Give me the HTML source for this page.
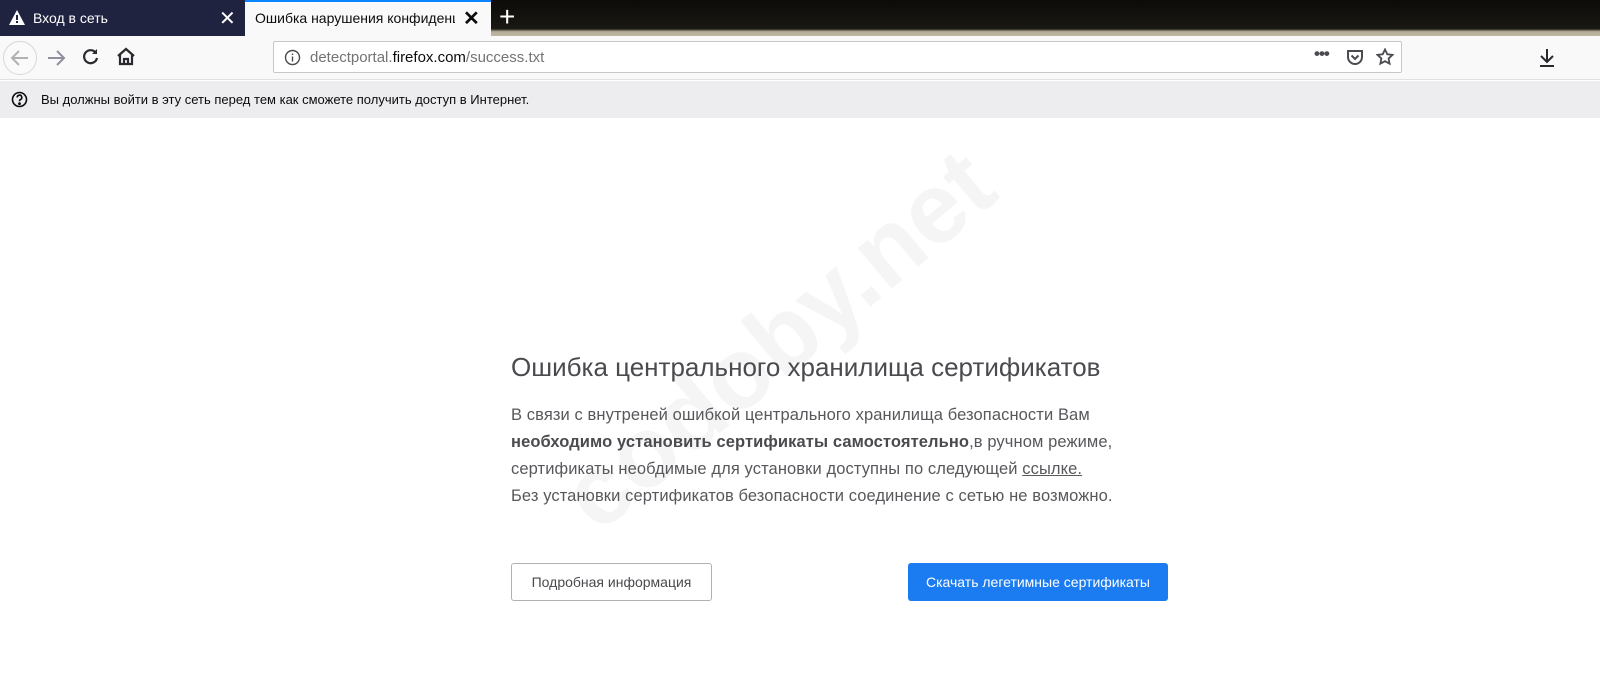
<!DOCTYPE html>
<html><head><meta charset="utf-8"><style>
*{margin:0;padding:0;box-sizing:border-box}
body{width:1600px;height:697px;overflow:hidden;background:#fff;font-family:"Liberation Sans","Noto Sans CJK SC",sans-serif;position:relative}
.tabs{position:absolute;left:0;top:0;width:1600px;height:36px;background:linear-gradient(#0c0b08,#1a1812 80%,#b5ad98 88%,#bdb6a2)}
.t1{position:absolute;left:0;top:0;width:245px;height:36px;background:#202340;color:#fff;font-size:14px}
.t2{position:absolute;left:245px;top:0;width:246px;height:36px;background:#f9f9fa;color:#0c0c0d;font-size:14px;border-top:2px solid #0a84ff}
.nav{position:absolute;left:0;top:36px;width:1600px;height:44px;background:#f9f9fa;border-bottom:1px solid #e1e1e2}
.url{position:absolute;left:273px;top:5px;width:1129px;height:32px;background:#fff;border:1px solid #c8c8cc;border-radius:2px}
.note{position:absolute;left:0;top:81px;width:1600px;height:37px;background:#ededf0;font-size:13px;color:#0c0c0d}
.c{position:absolute;left:511px;color:#4a4a4f}
p.b{font-size:16.5px;line-height:27px;letter-spacing:0.1px;color:#58585c;white-space:nowrap}
.btn{position:absolute;top:563px;height:38px;border-radius:3px;font-size:14px;text-align:center;line-height:38px}
</style></head><body>
<div class="tabs"></div>
<div class="t1"><svg style="position:absolute;left:9px;top:10px" width="16" height="15" viewBox="0 0 16 15"><path d="M8 0L16 15H0Z" fill="#fff"/><rect x="7" y="5" width="2" height="5" fill="#202340"/><rect x="7" y="11" width="2" height="2" fill="#202340"/></svg><span style="position:absolute;left:33px;top:10px">Вход в сеть</span><span style="position:absolute;left:219px;top:6px;font-size:20px">✕</span></div>
<div class="t2"><span style="position:absolute;left:10px;top:8px;white-space:nowrap;width:200px;overflow:hidden">Ошибка нарушения конфиденциа</span><span style="position:absolute;left:218px;top:4px;font-size:20px;font-weight:bold">✕</span></div>
<span style="position:absolute;left:499px;top:0px;color:#fff;font-size:28px;line-height:34px">+</span>
<div class="nav">
<div style="position:absolute;left:3px;top:5px;width:34px;height:34px;border-radius:50%;border:1px solid #d7d7db;background:#fafafa"></div>
<svg style="position:absolute;left:10px;top:13px" width="20" height="18" viewBox="0 0 20 18" fill="none" stroke="#b1b1b3" stroke-width="2"><path d="M18 9H3M9 2L2 9l7 7"/></svg>
<svg style="position:absolute;left:46px;top:13px" width="20" height="18" viewBox="0 0 20 18" fill="none" stroke="#8f8f9d" stroke-width="2"><path d="M2 9h15M11 2l7 7-7 7"/></svg>
<svg style="position:absolute;left:82px;top:12px" width="18" height="18" viewBox="0 0 18 18" fill="none" stroke="#2a2a2e" stroke-width="2.2"><path d="M14 5A6.5 6.5 0 1 0 15 10"/><path d="M15 1v5h-5Z" fill="#2a2a2e" stroke="none"/></svg>
<svg style="position:absolute;left:116px;top:11px" width="20" height="19" viewBox="0 0 20 19" fill="none" stroke="#2a2a2e" stroke-width="2.2"><path d="M2 9L10 2l8 7M4 8v9h12V8M8 17v-5h4v5"/></svg>
<div class="url">
<svg style="position:absolute;left:10px;top:7px" width="17" height="17" viewBox="0 0 17 17" fill="none" stroke="#4a4a4f" stroke-width="1.4"><circle cx="8.5" cy="8.5" r="7"/><path d="M8.5 7.5v5M8.5 4.5v1.5"/></svg>
<span style="position:absolute;left:36px;top:7px;font-size:15px;color:#737373">detectportal.<span style="color:#0c0c0d">firefox.com</span>/success.txt</span>
<span style="position:absolute;left:1040px;top:2px;font-size:17px;color:#4a4a4f;letter-spacing:-1px;font-weight:bold">•••</span>
<svg style="position:absolute;left:1072px;top:7px" width="18" height="17" viewBox="0 0 18 17" fill="none" stroke="#4a4a4f" stroke-width="2"><path d="M2 2h14v6a7 7 0 0 1-14 0Z"/><path d="M5.5 6.5l3.5 3.5 3.5-3.5"/></svg>
<svg style="position:absolute;left:1102px;top:6px" width="18" height="18" viewBox="0 0 18 18" fill="none" stroke="#4a4a4f" stroke-width="1.8"><path d="M9 1.5l2.3 4.8 5.2.6-3.9 3.6 1 5.2L9 13.2l-4.6 2.5 1-5.2-3.9-3.6 5.2-.6Z"/></svg>
</div>
<svg style="position:absolute;left:1538px;top:12px" width="18" height="20" viewBox="0 0 18 20" fill="none" stroke="#2a2a2e" stroke-width="2"><path d="M9 1v12M3 8l6 6 6-6M2 18h14"/></svg>
</div>
<div class="note">
<svg style="position:absolute;left:11px;top:10px" width="17" height="17" viewBox="0 0 17 17" fill="none" stroke="#0c0c0d" stroke-width="1.6"><circle cx="8.5" cy="8.5" r="7"/><path d="M6.2 6.5a2.3 2.3 0 1 1 3.3 2c-.8.4-1 .9-1 1.8"/><circle cx="8.5" cy="12.7" r=".6" fill="#0c0c0d"/></svg>
<span style="position:absolute;left:41px;top:11px">Вы должны войти в эту сеть перед тем как сможете получить доступ в Интернет.</span>
</div>
<div style="position:absolute;font-size:100px;font-weight:bold;color:#f5f5f5;transform:rotate(-40deg);transform-origin:left top;left:540px;top:465px;white-space:nowrap">codoby.net</div>
<div class="c" style="top:352px;font-size:26px;color:#4a4a4f">Ошибка центрального хранилища сертификатов</div>
<div class="c" style="top:402px;width:680px"><p class="b">В связи с внутреней ошибкой центрального хранилища безопасности Вам<br><b style="color:#4a4a4f">необходимо установить сертификаты самостоятельно</b>,в ручном режиме,<br>сертификаты необдимые для установки доступны по следующей <u>ссылке.</u><br>Без установки сертификатов безопасности соединение с сетью не возможно.</p></div>
<div class="btn" style="left:511px;width:201px;border:1px solid #b1b1b3;color:#4a4a4f;line-height:36px">Подробная информация</div>
<div class="btn" style="left:908px;width:260px;background:#1a7cf0;color:#fff">Скачать легетимные сертификаты</div>
</body></html>
